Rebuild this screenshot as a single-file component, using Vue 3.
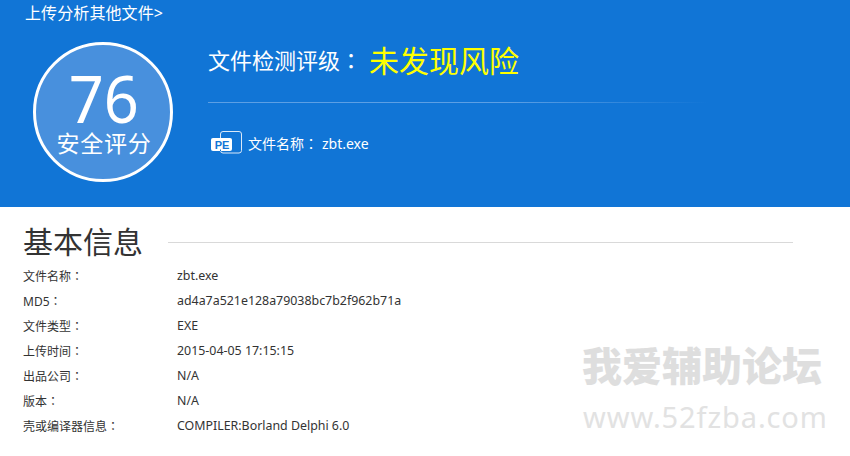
<script setup>
const rows = [
  ['文件名称', 'zbt.exe'],
  ['MD5', 'ad4a7a521e128a79038bc7b2f962b71a'],
  ['文件类型', 'EXE'],
  ['上传时间', '2015-04-05 17:15:15'],
  ['出品公司', 'N/A'],
  ['版本', 'N/A'],
  ['壳或编译器信息', 'COMPILER:Borland Delphi 6.0'],
]
</script>

<template>
  <div class="page">
    <header class="hero">
      <a class="upload">上传分析其他文件&gt;</a>
      <div class="summary">
        <div class="score">
          <span class="num">76</span>
          <span class="cap">安全评分</span>
        </div>
        <div class="detail">
          <div class="rating">
            <span class="rating-label">文件检测评级<span class="colon">：</span></span>
            <span class="rating-value">未发现风险</span>
          </div>
          <div class="rule"></div>
          <div class="file">
            <svg class="pe" width="32" height="24" viewBox="0 0 32 24">
              <rect x="9.5" y="0.5" width="21" height="21.5" rx="2.5" fill="none" stroke="#dbe9f8" stroke-width="1"/>
              <rect x="0" y="7" width="21" height="13" rx="2" fill="#fff"/>
              <path d="M9.5 20v-1.5" stroke="#1175d6" stroke-width="1"/>
              <text x="11" y="17.5" text-anchor="middle" class="pe-text">PE</text>
            </svg>
            <span class="file-name">文件名称<span class="colon">：</span><span class="file-val">zbt.exe</span></span>
          </div>
        </div>
      </div>
    </header>
    <section class="info">
      <div class="title-row">
        <h2>基本信息</h2>
        <div class="title-line"></div>
      </div>
      <div v-for="r in rows" :key="r[0]" class="row">
        <span class="key">{{ r[0] }}<span class="colon">：</span></span>
        <span class="val">{{ r[1] }}</span>
      </div>
    </section>
    <div class="mark">
      <div class="mark-cn">我爱辅助论坛</div>
      <div class="mark-en">www.52fzba.com</div>
    </div>
  </div>
</template>

<style>
html, body { margin: 0; background: #fff; }
</style>

<style scoped>
.page {
  position: relative;
  width: 850px;
  height: 456px;
  overflow: hidden;
  background: #fff;
  font-family: "Noto Sans", "Noto Sans CJK SC", sans-serif;
}
.colon {
  font-family: "Noto Sans CJK TC", sans-serif;
}
.hero {
  height: 207px;
  background: #1175d6;
  color: #fff;
  box-sizing: border-box;
  padding: 3px 0 0 25px;
}
.upload {
  display: block;
  font-size: 16px;
  line-height: 20px;
  letter-spacing: 0.1px;
}
.summary {
  display: flex;
  margin: 19px 0 0 8px;
}
.score {
  width: 140px;
  height: 140px;
  box-sizing: border-box;
  border: 3px solid #fff;
  border-radius: 50%;
  background: #4890dd;
  display: flex;
  flex-direction: column;
  align-items: center;
}
.num {
  font-size: 66px;
  line-height: 50px;
  height: 50px;
  margin-top: 27px;
  margin-left: 2px;
  transform: scaleX(0.93);
}
.cap {
  font-size: 23px;
  line-height: 28px;
  letter-spacing: 0.8px;
  margin: 7px 0 0 2px;
}
.detail {
  margin-left: 35px;
  width: 500px;
}
.rating {
  display: flex;
  align-items: center;
  height: 34px;
}
.rating-label {
  font-size: 22px;
  width: 161px;
}
.rating-value {
  font-size: 30px;
  color: #ffff00;
}
.rule {
  height: 1px;
  margin-top: 26px;
  background: linear-gradient(to right, #5c9fe4, #5c9fe4 60%, #1175d6);
}
.file {
  display: flex;
  align-items: center;
  margin: 28px 0 0 3px;
  height: 24px;
}
.pe-text {
  font-family: "Liberation Sans", sans-serif;
  font-size: 11px;
  font-weight: 700;
  fill: #1175d6;
}
.file-name {
  margin-left: 5px;
  font-size: 14px;
}
.file-val {
  margin-left: 4px;
}
.info {
  padding: 17px 0 0 23px;
  color: #333;
}
.title-row {
  display: flex;
  align-items: center;
  height: 36px;
  margin-bottom: 3px;
}
h2 {
  margin: 0;
  font-size: 30px;
  font-weight: 400;
  line-height: 36px;
}
.title-line {
  margin-left: 25px;
  width: 625px;
  height: 1px;
  background: #d9d9d9;
}
.row {
  display: flex;
  font-size: 12px;
  line-height: 25px;
  height: 25px;
}
.key { width: 154px; }
.val { font-size: 12.4px; }
.mark {
  position: absolute;
  left: 582px;
  top: 345px;
  color: #dedede;
  pointer-events: none;
}
.mark-cn {
  font-size: 40px;
  font-weight: 900;
  line-height: 42px;
}
.mark-en {
  font-size: 29px;
  line-height: 34px;
  letter-spacing: 0.9px;
  margin: 13px 0 0 1px;
  color: #e2e2e2;
}
</style>
